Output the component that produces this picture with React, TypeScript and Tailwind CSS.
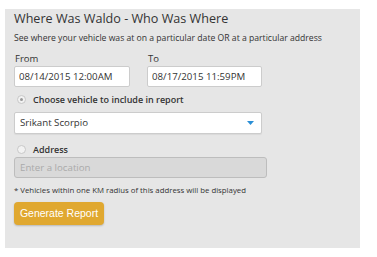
import * as React from "react";

export default function App() {
  return (
    <div className="min-h-screen bg-white pl-[5px] pt-[9px] font-['Open_Sans',sans-serif] text-[#333]">
      <div className="flex h-[239px] w-[355px] flex-col bg-[#e6e6e6] px-[9px]">
        {/* heading */}
        <h1 className="text-[12.6px] leading-[20px] text-[#333]">Where Was Waldo - Who Was Where</h1>
        <p className="mt-[3px] text-[8.65px] leading-[12px] text-[#333]">
          See where your vehicle was at on a particular date OR at a particular address
        </p>

        {/* date range */}
        <div className="mt-[8px] flex gap-[17px]">
          <div className="flex flex-col">
            <label className="pl-[1px] text-[9.5px] leading-[13px]">From</label>
            <input
              readOnly
              value="08/14/2015 12:00AM"
              className="mt-[1px] h-[21px] w-[116px] rounded-[2px] border border-[#ccc] bg-white px-[4px] text-[9.7px] text-[#333] outline-none"
            />
          </div>
          <div className="flex flex-col">
            <label className="pl-[1px] text-[9.5px] leading-[13px]">To</label>
            <input
              readOnly
              value="08/17/2015 11:59PM"
              className="mt-[1px] h-[21px] w-[115px] rounded-[2px] border border-[#ccc] bg-white px-[4px] text-[9.7px] text-[#333] outline-none"
            />
          </div>
        </div>

        {/* vehicle */}
        <label className="mt-[6px] flex items-center gap-[7px] pl-[3px]">
          <span className="flex h-[9px] w-[9px] items-center justify-center rounded-full border border-[#c8c8c8] bg-[#f2f2f2]">
            <span className="h-[3px] w-[3px] rounded-full bg-[#999]" />
          </span>
          <span className="text-[9px] font-semibold leading-[13px]">Choose vehicle to include in report</span>
        </label>
        <div className="mt-[6px] flex h-[22px] w-[248px] items-center justify-between rounded-[2px] border border-[#ccc] bg-white pl-[5px] pr-[7px] shadow-[0_1px_1px_rgba(0,0,0,0.06)]">
          <span className="text-[9.7px]">Srikant Scorpio</span>
          <svg width="7" height="4" viewBox="0 0 7 4">
            <path d="M0 0H7L3.5 4Z" fill="#2a8fd6" />
          </svg>
        </div>

        {/* address */}
        <label className="mt-[9px] flex items-center gap-[7px] pl-[3px]">
          <span className="h-[9px] w-[9px] rounded-full border border-[#c8c8c8] bg-[#f2f2f2]" />
          <span className="text-[9px] font-semibold leading-[13px]">Address</span>
        </label>
        <input
          readOnly
          placeholder="Enter a location"
          className="mt-[1px] h-[21px] w-[253px] rounded-[3px] border border-[#bdbdbd] bg-[#d9d9d9] px-[5px] text-[9.7px] outline-none placeholder:text-[#aaa]"
        />
        <p className="mt-[7px] text-[7.8px] leading-[11px]">
          * Vehicles within one KM radius of this address will be displayed
        </p>

        <button
          type="button"
          className="mt-[6px] h-[23px] w-[90px] rounded-[4px] bg-[#e0a830] font-['Liberation_Sans',Arial,sans-serif] text-[10.5px] text-white shadow-[0_1px_2px_rgba(0,0,0,0.2)]"
        >
          Generate Report
        </button>
      </div>
    </div>
  );
}
